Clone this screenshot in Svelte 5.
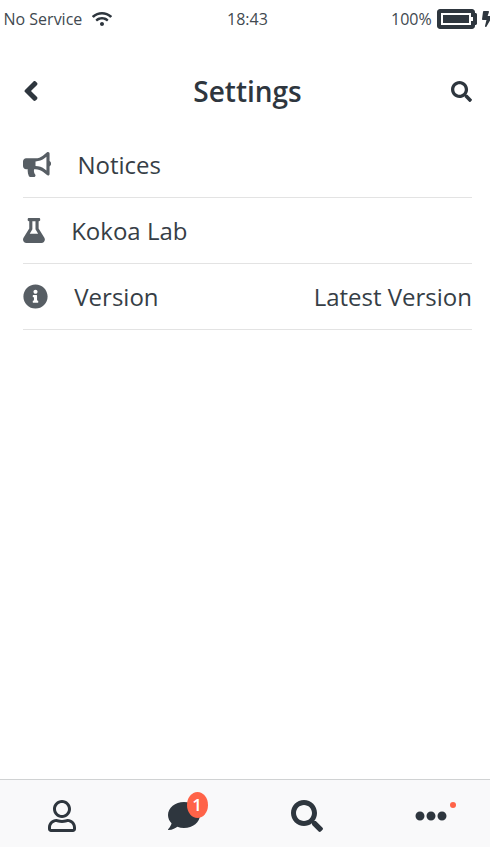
<script>
  const icons = {
    wifi: [640, 'M634.91 154.88C457.74-8.99 182.19-8.93 5.09 154.88c-6.66 6.16-6.79 16.59-.35 22.98l34.24 33.97c6.14 6.1 16.02 6.23 22.4.38 145.92-133.68 371.3-133.71 517.25 0 6.38 5.85 16.26 5.71 22.4-.38l34.24-33.97c6.43-6.39 6.3-16.82-.36-22.98zM320 352c-35.35 0-64 28.65-64 64s28.65 64 64 64 64-28.65 64-64-28.65-64-64-64zm202.67-83.59c-115.26-101.93-290.21-101.82-405.34 0-6.9 6.1-7.12 16.69-.57 23.15l34.44 33.99c6 5.92 15.66 6.32 22.05.8 83.95-72.57 209.74-72.41 293.49 0 6.39 5.52 16.05 5.13 22.05-.8l34.44-33.99c6.56-6.46 6.33-17.06-.56-23.15z'],
    battery: [640, 'M544 160v64h32v64h-32v64H64V160h480m16-64H48c-26.51 0-48 21.49-48 48v224c0 26.51 21.49 48 48 48h512c26.51 0 48-21.49 48-48v-16h8c13.255 0 24-10.745 24-24V184c0-13.255-10.745-24-24-24h-8v-16c0-26.51-21.49-48-48-48zm-48 96H96v128h416V192z'],
    bolt: [320, 'M296 160H180.6l42.6-129.8C227.2 15 215.7 0 200 0H56C44 0 33.8 8.9 32.2 20.8l-32 240C-1.7 275.2 9.5 288 24 288h118.7L96.6 482.5c-3.6 15.2 8 29.5 23.3 29.5 8.4 0 16.4-4.4 20.8-12l176-304c9.3-15.9-2.2-36-20.7-36z'],
    back: [256, 'M31.7 239l136-136c9.4-9.4 24.6-9.4 33.9 0l22.6 22.6c9.4 9.4 9.4 24.6 0 33.9L127.9 256l96.4 96.4c9.4 9.4 9.4 24.6 0 33.9L201.7 409c-9.4 9.4-24.6 9.4-33.9 0l-136-136c-9.5-9.4-9.5-24.6-.1-34z'],
    search: [512, 'M505 442.7L405.3 343c-4.5-4.5-10.6-7-17-7H372c27.6-35.3 44-79.7 44-128C416 93.1 322.9 0 208 0S0 93.1 0 208s93.1 208 208 208c48.3 0 92.7-16.4 128-44v16.3c0 6.4 2.5 12.5 7 17l99.7 99.7c9.4 9.4 24.6 9.4 33.9 0l28.3-28.3c9.4-9.4 9.4-24.6.1-34zM208 336c-70.7 0-128-57.2-128-128 0-70.7 57.2-128 128-128 70.7 0 128 57.2 128 128 0 70.7-57.2 128-128 128z'],
    bullhorn: [576, 'M576 240c0-23.63-12.95-44.04-32-55.12V32.01C544 23.26 537.02 0 512 0c-7.12 0-14.19 2.38-19.98 7.02l-85.03 68.03C364.28 109.19 310.66 128 256 128H64c-35.35 0-64 28.65-64 64v96c0 35.35 28.65 64 64 64h33.7c-1.39 10.48-2.18 21.14-2.18 32 0 39.77 9.26 77.35 25.56 110.94 5.19 10.69 16.52 17.06 28.4 17.06h74.28c26.05 0 41.69-29.84 25.9-50.56-16.4-21.52-26.15-48.36-26.15-77.44 0-11.11 1.62-21.79 4.41-32H256c54.66 0 108.28 18.81 150.98 52.95l85.03 68.03a32.023 32.023 0 0 0 19.98 7.02c24.92 0 32-22.78 32-32V295.13C563.05 284.04 576 263.63 576 240zm-96 141.42l-33.05-26.44C392.95 311.78 325.12 288 256 288v-96c69.12 0 136.95-23.78 190.95-66.98L480 98.58v282.84z'],
    flask: [448, 'M437.2 403.5L320 215V64h8c13.3 0 24-10.7 24-24V24c0-13.3-10.7-24-24-24H120c-13.3 0-24 10.7-24 24v16c0 13.3 10.7 24 24 24h8v151L10.8 403.5C-18.5 450.6 15.3 512 70.9 512h306.2c55.7 0 89.4-61.5 60.1-108.5zM137.9 320l48.2-77.6c3.7-5.2 5.8-11.6 5.8-18.4V64h64v160c0 6.9 2.2 13.2 5.8 18.4l48.2 77.6h-172z'],
    info: [512, 'M256 8C119.043 8 8 119.083 8 256c0 136.997 111.043 248 248 248s248-111.003 248-248C504 119.083 392.957 8 256 8zm0 110c23.196 0 42 18.804 42 42s-18.804 42-42 42-42-18.804-42-42 18.804-42 42-42zm56 254c0 6.627-5.373 12-12 12h-88c-6.627 0-12-5.373-12-12v-24c0-6.627 5.373-12 12-12h12v-64h-12c-6.627 0-12-5.373-12-12v-24c0-6.627 5.373-12 12-12h64c6.627 0 12 5.373 12 12v100h12c6.627 0 12 5.373 12 12v24z'],
    user: [448, 'M313.6 304c-28.7 0-42.5 16-89.6 16-47.1 0-60.8-16-89.6-16C60.2 304 0 364.2 0 438.4V464c0 26.5 21.5 48 48 48h352c26.5 0 48-21.5 48-48v-25.6c0-74.2-60.2-134.4-134.4-134.4zM400 464H48v-25.6c0-47.6 38.8-86.4 86.4-86.4 14.6 0 38.3 16 89.6 16 51.7 0 74.9-16 89.6-16 47.6 0 86.4 38.8 86.4 86.4V464zM224 288c79.5 0 144-64.5 144-144S303.5 0 224 0 80 64.5 80 144s64.5 144 144 144zm0-240c52.9 0 96 43.1 96 96s-43.1 96-96 96-96-43.1-96-96 43.1-96 96-96z'],
    comment: [512, 'M256 32C114.6 32 0 125.1 0 240c0 49.6 21.4 95 57 130.7C44.5 421.1 2.7 466 2.2 466.5c-2.2 2.3-2.8 5.7-1.5 8.7S4.8 480 8 480c66.3 0 116-31.8 140.6-51.4 32.7 12.3 69 19.4 107.4 19.4 141.4 0 256-93.1 256-208S397.4 32 256 32z'],
    more: [512, 'M328 256c0 39.8-32.2 72-72 72s-72-32.2-72-72 32.2-72 72-72 72 32.2 72 72zm104-72c-39.8 0-72 32.2-72 72s32.2 72 72 72 72-32.2 72-72-32.2-72-72-72zm-352 0c-39.8 0-72 32.2-72 72s32.2 72 72 72 72-32.2 72-72-32.2-72-72-72z'],
  };
  const rows = [
    { icon: 'bullhorn', label: 'Notices' },
    { icon: 'flask', label: 'Kokoa Lab' },
    { icon: 'info', label: 'Version', value: 'Latest Version' },
  ];
  const tabs = [
    { icon: 'user' },
    { icon: 'comment', badge: '1' },
    { icon: 'search' },
    { icon: 'more', dot: true },
  ];
</script>

{#snippet icon(name, size)}
  <svg class="icon" viewBox="0 0 {icons[name][0]} 512" width={(icons[name][0] / 512) * size} height={size} aria-hidden="true">
    <path d={icons[name][1]} />
  </svg>
{/snippet}

<div class="screen">
  <div class="status">
    <div class="side"><span class="carrier">No Service</span>{@render icon('wifi', 16)}</div>
    <span class="clock">18:43</span>
    <div class="side power"><span class="percent">100%</span>{@render icon('battery', 32)}{@render icon('bolt', 16)}</div>
  </div>

  <header>
    <div class="edge">{@render icon('back', 32)}</div>
    <h1>Settings</h1>
    <div class="edge end">{@render icon('search', 21)}</div>
  </header>

  <main>
    {#each rows as row}
      <div class="row">
        {@render icon(row.icon, 25)}
        <span class="label">{row.label}</span>
        {#if row.value}<span class="value">{row.value}</span>{/if}
      </div>
    {/each}
  </main>

  <nav>
    {#each tabs as tab}
      <div class="tab">
        <span class="holder">
          {@render icon(tab.icon, 32)}
          {#if tab.badge}<span class="badge">{tab.badge}</span>{/if}
          {#if tab.dot}<span class="dot"></span>{/if}
        </span>
      </div>
    {/each}
  </nav>
</div>

<style>
  .screen {
    display: flex;
    flex-direction: column;
    width: 100%;
    height: 100vh;
    overflow: hidden;
    box-sizing: border-box;
    background: #fff;
    color: #2e363e;
    font-family: 'Open Sans', 'Noto Sans', sans-serif;
    font-weight: 400;
  }
  .icon {
    display: block;
    flex: none;
    fill: #2e363e;
  }
  .status {
    display: flex;
    align-items: center;
    height: 38px;
    flex: none;
    padding-left: 3.5px;
    color: #414950;
    font-size: 16px;
    line-height: 22px;
    white-space: nowrap;
  }
  .side {
    display: flex;
    align-items: center;
    width: 223.5px;
    flex: none;
  }
  .carrier {
    width: 78px;
    margin-right: 10px;
  }
  .clock {
    width: 41px;
    flex: none;
  }
  .power {
    width: auto;
    margin-left: 123px;
  }
  .percent {
    width: 40px;
    margin-right: 5.5px;
  }
  .power .icon + .icon {
    margin-left: 5px;
  }
  header {
    display: flex;
    align-items: center;
    height: 94px;
    flex: none;
    padding: 12px 18px 0 23px;
    box-sizing: border-box;
  }
  .edge {
    width: 60px;
  }
  .end {
    display: flex;
    justify-content: flex-end;
  }
  h1 {
    flex: 1;
    margin: 0;
    text-align: center;
    font-size: 28px;
    line-height: 38px;
    font-weight: 600;
  }
  main {
    flex: 1;
    padding: 0 18px 0 23px;
  }
  .row {
    display: flex;
    align-items: center;
    height: 65px;
    border-bottom: 1px solid #e3e3e3;
    color: #363e46;
    font-size: 24px;
    line-height: 32px;
  }
  .row .icon {
    opacity: 0.8;
  }
  .label {
    margin-left: 26.3px;
  }
  .value {
    margin-left: auto;
  }
  nav {
    display: flex;
    justify-content: space-between;
    flex: none;
    height: 63px;
    padding: 4px 43px 0 48px;
    border-top: 1px solid #d0d2d3;
    background: #f9f9fa;
  }
  .tab {
    display: flex;
    align-items: center;
  }
  .holder {
    position: relative;
  }
  .badge {
    position: absolute;
    left: 19px;
    top: -8px;
    width: 21px;
    height: 26px;
    border-radius: 50%;
    background: #ff6348;
    color: #fff;
    font-size: 17px;
    font-weight: 600;
    line-height: 26px;
    text-align: center;
  }
  .dot {
    position: absolute;
    left: 35px;
    top: 2px;
    width: 6px;
    height: 6px;
    border-radius: 50%;
    background: #ff6348;
  }
</style>
